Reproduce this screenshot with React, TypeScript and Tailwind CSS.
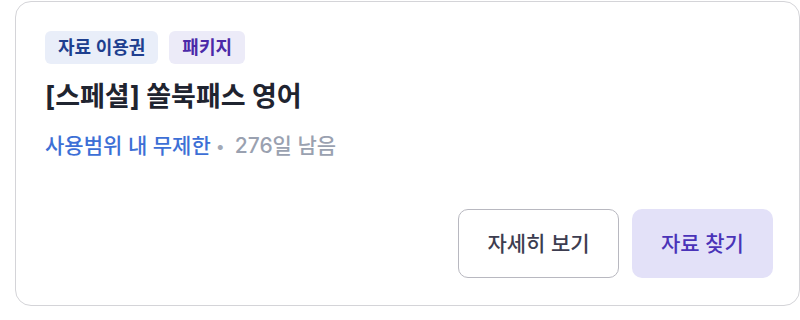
import React from "react";

export default function App() {
  const font = { fontFamily: 'Inter, "Noto Sans CJK KR", sans-serif' };
  return (
    <div className="w-[800px] h-[320px] bg-white pt-px pl-[15px]" style={font}>
      <div className="w-[785px] h-[305px] border border-[#d4d4d8] rounded-[16px] flex flex-col pl-[29px] pr-[26px] pt-[29px] pb-[27px]">
        <div className="flex gap-[11px]">
          <span className="h-[33px] px-[13px] flex items-center rounded-[6px] bg-[#e9eef9] text-[#1e3f8f] text-[18px] font-semibold">자료 이용권</span>
          <span className="h-[33px] px-[13px] flex items-center rounded-[6px] bg-[#ecebf8] text-[#4b2aa8] text-[18px] font-semibold">패키지</span>
        </div>
        <div className="mt-[16px] text-[27px] leading-[34px] font-bold text-[#1f2430]">[스페셜] 쏠북패스 영어</div>
        <div className="mt-[18px] flex items-center text-[21px] leading-[28px]">
          <span className="text-[#3d6fd6] font-medium">사용범위 내 무제한</span>
          <span className="text-[#a3a9b6] text-[16px] ml-[5px] mr-[10px]">•</span>
          <span className="text-[#9aa1b0] font-medium">276일 남음</span>
        </div>
        <div className="mt-auto flex justify-end gap-[13px]">
          <button className="w-[161px] h-[69px] rounded-[10px] border border-[#b8b8c0] bg-white text-[21px] font-medium text-[#3d3d50]">자세히 보기</button>
          <button className="w-[141px] h-[69px] rounded-[10px] bg-[#e3e1f8] text-[21px] font-medium text-[#4a33b8]">자료 찾기</button>
        </div>
      </div>
    </div>
  );
}
